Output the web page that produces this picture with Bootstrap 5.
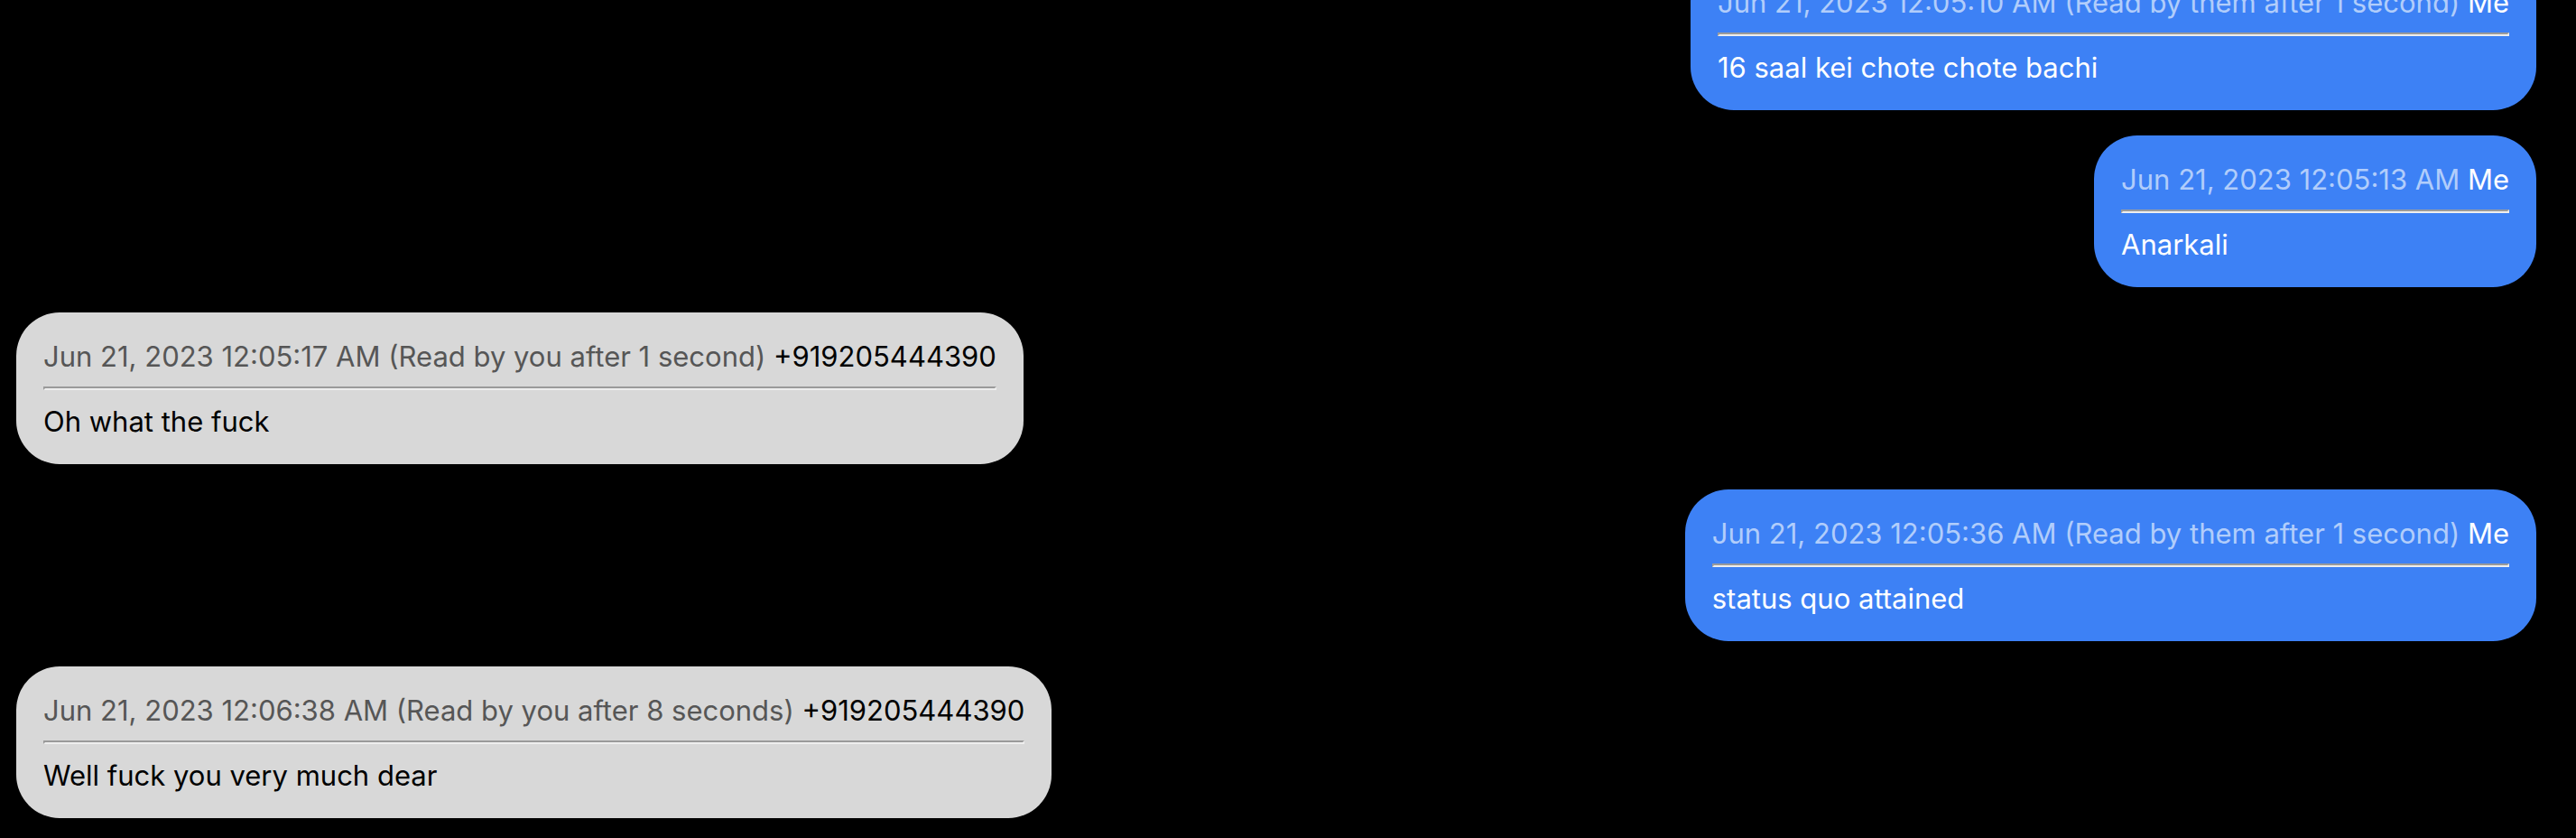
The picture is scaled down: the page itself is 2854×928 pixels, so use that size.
<!DOCTYPE html>
<html lang="en">
<head>
<meta charset="utf-8">
<meta name="viewport" content="width=device-width, initial-scale=1">
<title>Messages</title>
<link href="https://cdn.jsdelivr.net/npm/bootstrap@5.3.0/dist/css/bootstrap.min.css" rel="stylesheet">
<style>
  body {
    background: #000;
    font-family: Inter, "Liberation Sans", sans-serif;
    font-size: 31px;
    line-height: 38px;
  }
  .thread {
    gap: 28px;
    padding: 0 44px 22px 18px;
  }
  .bubble {
    max-width: 60%;
    padding: 30px 30px 28px;
    border-radius: 48px;
  }
  .bubble hr {
    margin: 14px 0 16px;
    border: 2px solid;
    border-color: #9a9a9a #eee #eee #9a9a9a;
    opacity: 1;
  }
  .sent { background: #3d81f5; color: #fff; }
  .received { background: #d8d8d8; color: #000; }
  .sent .stamp { color: #b1cdfb; }
  .received .stamp { color: #565656; }
</style>
</head>
<body>
<main class="thread d-flex flex-column justify-content-end vh-100 overflow-hidden">
  <article class="bubble sent align-self-end flex-shrink-0">
    <div><span class="stamp">Jun 21, 2023 12:05:10 AM (Read by them after 1 second)</span> <span>Me</span></div>
    <hr>
    <p class="mb-0">16 saal kei chote chote bachi</p>
  </article>
  <article class="bubble sent align-self-end flex-shrink-0">
    <div><span class="stamp">Jun 21, 2023 12:05:13 AM</span> <span>Me</span></div>
    <hr>
    <p class="mb-0">Anarkali</p>
  </article>
  <article class="bubble received align-self-start flex-shrink-0">
    <div><span class="stamp">Jun 21, 2023 12:05:17 AM (Read by you after 1 second)</span> <span>+919205444390</span></div>
    <hr>
    <p class="mb-0">Oh what the fuck</p>
  </article>
  <article class="bubble sent align-self-end flex-shrink-0">
    <div><span class="stamp">Jun 21, 2023 12:05:36 AM (Read by them after 1 second)</span> <span>Me</span></div>
    <hr>
    <p class="mb-0">status quo attained</p>
  </article>
  <article class="bubble received align-self-start flex-shrink-0">
    <div><span class="stamp">Jun 21, 2023 12:06:38 AM (Read by you after 8 seconds)</span> <span>+919205444390</span></div>
    <hr>
    <p class="mb-0">Well fuck you very much dear</p>
  </article>
</main>
<script src="https://cdn.jsdelivr.net/npm/bootstrap@5.3.0/dist/js/bootstrap.bundle.min.js"></script>
</body>
</html>
